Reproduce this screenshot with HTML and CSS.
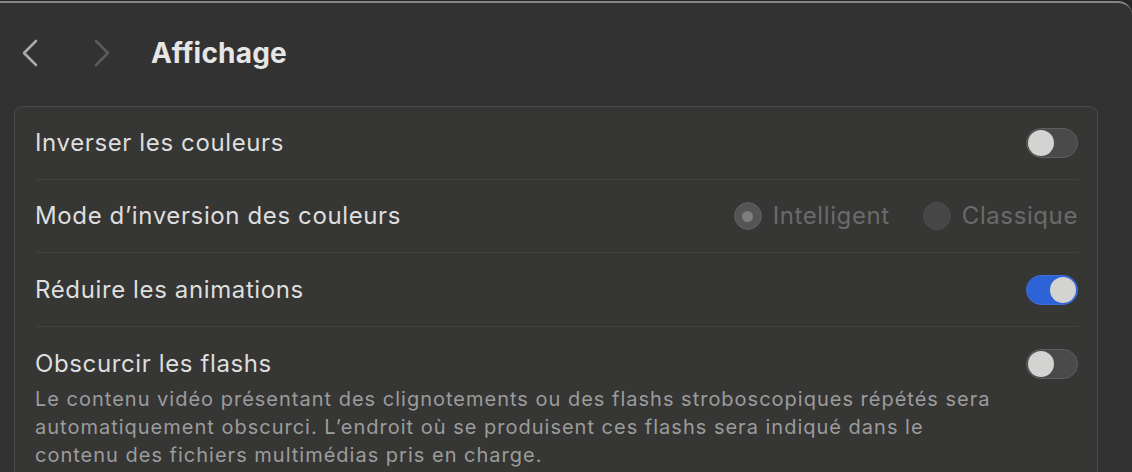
FILE: index.html
```html
<!DOCTYPE html>
<html lang="fr">
<head>
<meta charset="utf-8">
<title>Affichage</title>
<link rel="stylesheet" href="styles.css">
</head>
<body>
<div class="window">
  <header class="toolbar">
    <button class="nav nav-back" aria-label="Précédent">
      <svg width="18" height="28" viewBox="0 0 18 28"><path d="M15 2 L3 14 L15 26" fill="none" stroke="currentColor" stroke-width="2.6" stroke-linecap="round" stroke-linejoin="round"/></svg>
    </button>
    <button class="nav nav-forward" aria-label="Suivant">
      <svg width="18" height="28" viewBox="0 0 18 28"><path d="M3 2 L15 14 L3 26" fill="none" stroke="currentColor" stroke-width="2.6" stroke-linecap="round" stroke-linejoin="round"/></svg>
    </button>
    <h1 class="title">Affichage</h1>
  </header>

  <section class="card">
    <div class="row">
      <span class="label">Inverser les couleurs</span>
      <span class="toggle"><span class="knob"></span></span>
    </div>
    <div class="row">
      <span class="label">Mode d’inversion des couleurs</span>
      <div class="radios">
        <span class="radio radio-on"><span class="dot"></span>Intelligent</span>
        <span class="radio"><span class="dot"></span>Classique</span>
      </div>
    </div>
    <div class="row row-tall">
      <span class="label">Réduire les animations</span>
      <span class="toggle toggle-on"><span class="knob"></span></span>
    </div>
    <div class="row row-top">
      <div class="text">
        <div class="label">Obscurcir les flashs</div>
        <p class="desc">Le contenu vidéo présentant des clignotements ou des flashs stroboscopiques répétés sera automatiquement obscurci. L’endroit où se produisent ces flashs sera indiqué dans le contenu des fichiers multimédias pris en charge.</p>
      </div>
      <span class="toggle"><span class="knob"></span></span>
    </div>
  </section>
</div>
</body>
</html>
```

FILE: styles.css
```css
* { box-sizing: border-box; }

html, body {
  margin: 0;
  height: 100%;
  overflow: hidden;
}

body {
  background: #262626;
  font-family: "Inter", "Liberation Sans", sans-serif;
  padding-top: 1px;
}

.window {
  height: 100%;
  background: #323232;
  border-top: 2px solid #858585;
  border-top-right-radius: 14px;
}

.toolbar {
  display: flex;
  align-items: center;
  height: 103px;
  padding: 0 0 3px 19px;
}

.nav {
  background: none;
  border: 0;
  padding: 0;
  width: 22px;
  height: 30px;
  display: flex;
  align-items: center;
  justify-content: center;
}

.nav-back { color: #a9a9a9; }
.nav-forward { color: #5b5b5b; margin-left: 50px; }

.title {
  margin: 0 0 0 38px;
  font-size: 28px;
  font-weight: 700;
  letter-spacing: 0.2px;
  color: #e6e6e6;
}

.card {
  margin: 0 34px 0 14px;
  background: #363635;
  border: 1px solid #4b4b4b;
  border-bottom: 0;
  border-radius: 9px 9px 0 0;
  padding: 0 19px 0 20px;
}

.row {
  display: flex;
  align-items: center;
  justify-content: space-between;
  padding: 21px 0;
  min-height: 73px;
  border-bottom: 1px solid #414141;
}

.row-tall {
  min-height: 74px;
}

.row-top {
  align-items: flex-start;
  padding-top: 22px;
  border-bottom: 0;
}

.label {
  font-size: 24px;
  line-height: 30px;
  letter-spacing: 0.62px;
  color: #dedede;
}

.desc {
  margin: 6px 0 0;
  font-size: 20px;
  line-height: 28px;
  letter-spacing: 1px;
  color: #9c9c9c;
  max-width: 965px;
}

.toggle {
  flex: none;
  position: relative;
  width: 52px;
  height: 30px;
  border-radius: 15px;
  background: #4a4a4a;
  border: 1px solid #5e5e5e;
}

.toggle .knob {
  position: absolute;
  top: 1px;
  left: 1px;
  width: 26px;
  height: 26px;
  border-radius: 50%;
  background: #d3d3d2;
}

.toggle-on {
  background: #2d63d6;
  border-color: #3d6fd9;
}

.toggle-on .knob {
  left: auto;
  right: 1px;
}

.radios {
  display: flex;
  align-items: center;
  gap: 33px;
}

.radio {
  display: flex;
  align-items: center;
  gap: 11px;
  font-size: 24px;
  line-height: 30px;
  letter-spacing: 0.6px;
  color: #6a6a6a;
}

.radio .dot {
  width: 28px;
  height: 28px;
  border-radius: 50%;
  background: #464646;
  border: 1px solid #4e4e4e;
  display: flex;
  align-items: center;
  justify-content: center;
}

.radio-on .dot {
  background: #555555;
  border-color: #5c5c5c;
}

.radio-on .dot::after {
  content: "";
  width: 11px;
  height: 11px;
  border-radius: 50%;
  background: #7e7e7e;
}
```
